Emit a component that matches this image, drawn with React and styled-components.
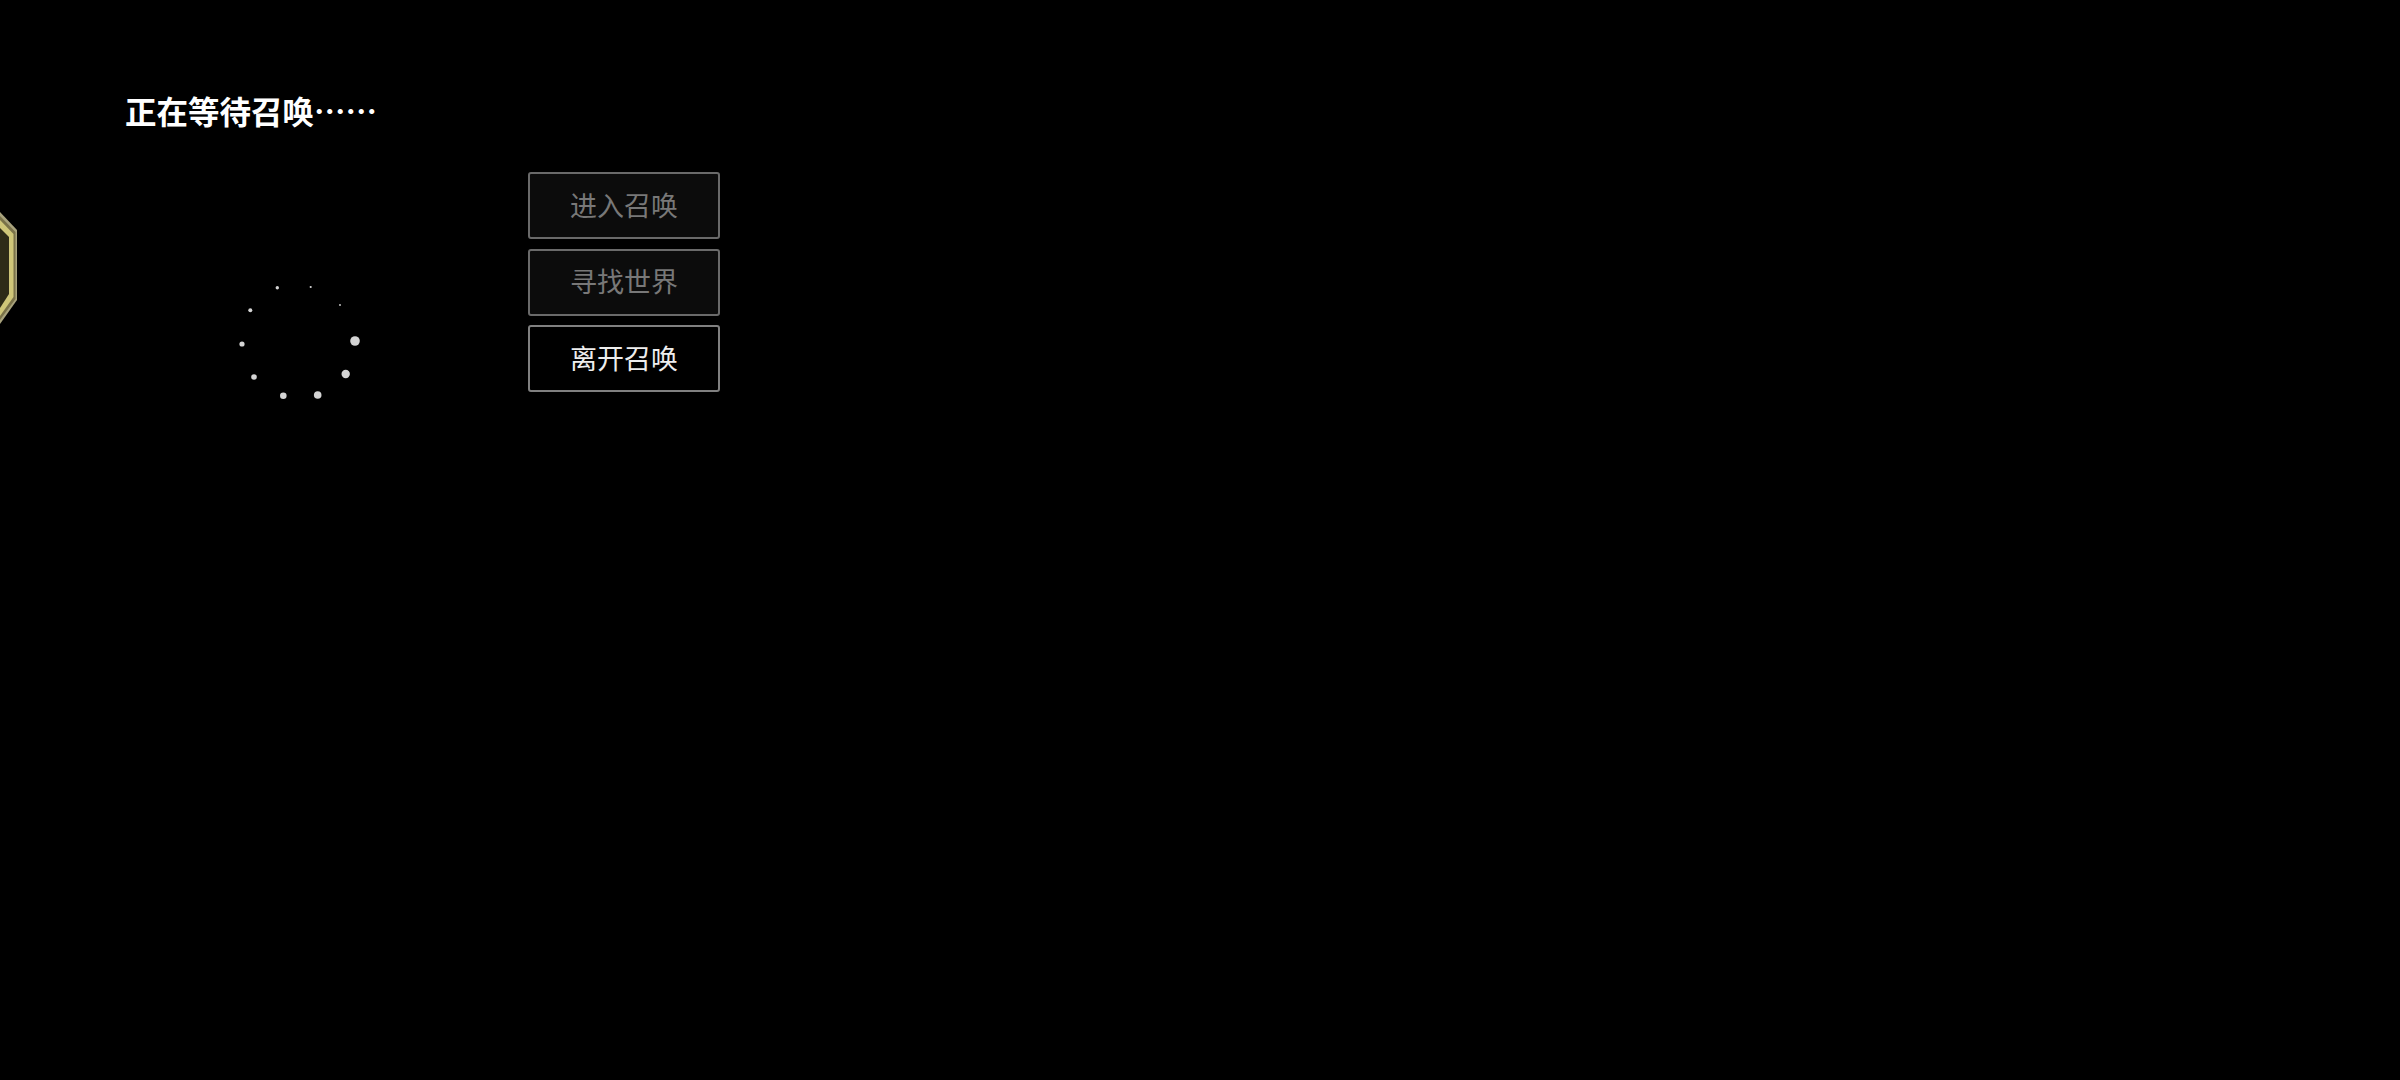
import React from 'react';
import styled, { createGlobalStyle } from 'styled-components';

const GlobalStyle = createGlobalStyle`
  html, body {
    margin: 0;
    padding: 0;
    background: #000;
    font-family: "Noto Sans CJK SC", "Liberation Sans", sans-serif;
  }
`;

const Screen = styled.div`
  position: relative;
  width: 2400px;
  height: 1080px;
  padding: 90px 0 0 125px;
  box-sizing: border-box;
  background: #000;
  overflow: hidden;
`;

const Title = styled.div`
  height: 40px;
  line-height: 40px;
  font-size: 31.5px;
  font-weight: 700;
  color: #fff;
  white-space: nowrap;
`;

const Body = styled.div`
  display: flex;
  align-items: flex-start;
  margin-top: 42px;
`;

const Spinner = styled.svg`
  display: block;
  width: 140px;
  height: 130px;
  margin: 103px 0 0 105px;
  flex: none;
  filter: blur(0.4px);
`;

const Actions = styled.div`
  display: flex;
  flex-direction: column;
  gap: 9.5px;
  margin-left: 158px;
`;

const ActionButton = styled.button`
  width: 192px;
  height: 67px;
  padding: 0 0 3px;
  box-sizing: border-box;
  border: 2px solid ${(p) => (p.$disabled ? '#6a6a6a' : '#808080')};
  border-radius: 3px;
  background: ${(p) => (p.$disabled ? '#0c0c0c' : '#000')};
  color: ${(p) => (p.$disabled ? '#787878' : '#eeeeee')};
  font-family: inherit;
  font-size: 27px;
  line-height: 1;
`;

const Badge = styled.svg`
  position: absolute;
  left: 0;
  top: 208px;
  width: 20px;
  height: 125px;
  filter: blur(0.6px);
`;

// centre x, centre y, radius: read clockwise from the biggest dot
const dots = [
  [125, 66, 4.8],
  [115.7, 99, 4.2],
  [87.7, 120, 3.8],
  [53.3, 120.7, 3.3],
  [24, 102, 2.8],
  [12, 69, 2.6],
  [20.3, 35.3, 2],
  [47.3, 12.7, 1.7],
  [80.7, 12, 1.1],
  [110, 30, 0.9],
];

const buttons = [
  { label: '进入召唤', disabled: true },
  { label: '寻找世界', disabled: true },
  { label: '离开召唤', disabled: false },
];

export default function App() {
  return (
    <Screen>
      <GlobalStyle />
      <Badge viewBox="0 0 20 125">
        <polygon points="0,4 17,22 17,92 0,116" fill="#a8a27c" />
        <polygon points="0,8 15.5,24 15.5,91 0,112" fill="#7a7248" />
        <polygon points="0,12 13.5,26 13.5,89 0,108" fill="#cfc678" />
        <polygon points="0,20 9,29 9,86 0,100" fill="#2e2b17" />
      </Badge>
      <Title>正在等待召唤……</Title>
      <Body>
        <Spinner viewBox="0 0 140 130">
          {dots.map(([cx, cy, r]) => (
            <circle key={cx} cx={cx} cy={cy} r={r} fill="#d4d4d4" />
          ))}
        </Spinner>
        <Actions>
          {buttons.map((b) => (
            <ActionButton key={b.label} $disabled={b.disabled}>
              {b.label}
            </ActionButton>
          ))}
        </Actions>
      </Body>
    </Screen>
  );
}
